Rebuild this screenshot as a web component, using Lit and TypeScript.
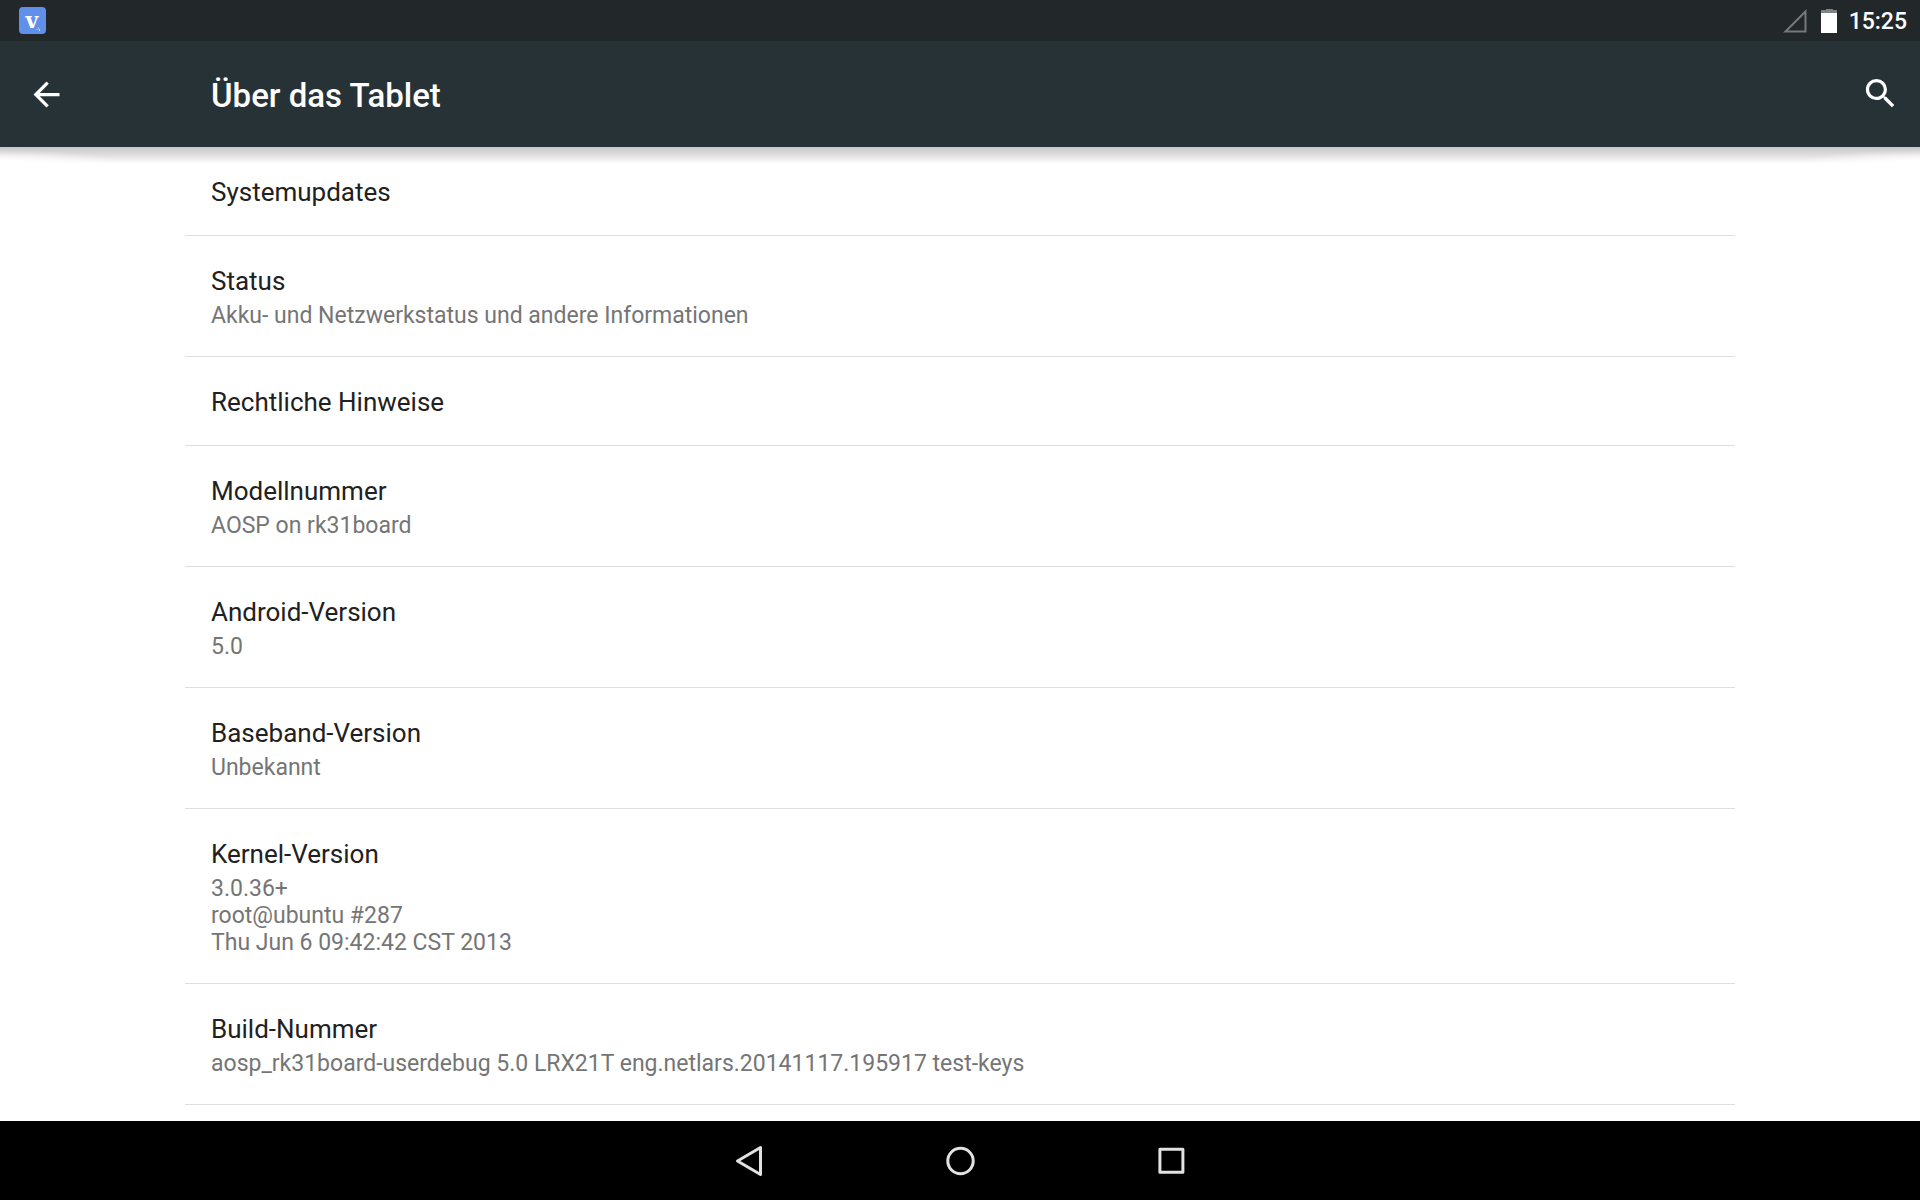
import { LitElement, html, css, svg, nothing } from "lit";
import { customElement, property } from "lit/decorators.js";

interface Entry {
  title: string;
  lines: string[];
  opens?: boolean;
}

const ENTRIES: Entry[] = [
  { title: "Systemupdates", lines: [], opens: true },
  { title: "Status", lines: ["Akku- und Netzwerkstatus und andere Informationen"], opens: true },
  { title: "Rechtliche Hinweise", lines: [], opens: true },
  { title: "Modellnummer", lines: ["AOSP on rk31board"] },
  { title: "Android-Version", lines: ["5.0"] },
  { title: "Baseband-Version", lines: ["Unbekannt"] },
  { title: "Kernel-Version", lines: ["3.0.36+", "root@ubuntu #287", "Thu Jun 6 09:42:42 CST 2013"] },
  { title: "Build-Nummer", lines: ["aosp_rk31board-userdebug 5.0 LRX21T eng.netlars.20141117.195917 test-keys"] },
];

@customElement("status-bar")
export class StatusBar extends LitElement {
  @property() time = "";

  static styles = css`
    :host {
      display: flex;
      align-items: center;
      height: 41px;
      padding: 0 13px 0 19px;
      background: #22272a;
      color: #fff;
      flex: none;
    }
    .spacer {
      flex: 1;
    }
    svg {
      display: block;
    }
    .app {
      overflow: visible;
    }
    .mark {
      font-family: "DejaVu Serif", serif;
      font-size: 22px;
      font-weight: 700;
    }
    .signal {
      margin-right: 14px;
    }
    .battery {
      margin-right: 12px;
    }
    .time {
      padding-top: 2px;
      font-size: 23px;
      font-weight: 500;
      line-height: 28px;
    }
  `;

  render() {
    return html`
      <svg class="app" width="27" height="27" viewBox="0 0 27 27" aria-hidden="true">
        <rect width="27" height="27" rx="4" fill="#6190ea" />
        <text class="mark" x="13" y="21" text-anchor="middle" fill="#fff">v</text>
        <path d="M17.500 22.500h1M19.500 20.500v1M20.500 22v2" stroke="#cfdcf8" />
      </svg>
      <div class="spacer"></div>
      <svg class="signal" width="24" height="24" viewBox="0 0 24 24" aria-hidden="true">
        <path d="M2.500 22.500h20V2.500z" fill="none" stroke="#75797a" stroke-width="2" />
      </svg>
      <svg class="battery" width="16" height="24" viewBox="0 0 16 24" aria-hidden="true">
        <path d="M5 0h7v1h4v3H0V1h5z" fill="#808384" />
        <path d="M0 4h16v20H0z" fill="#fff" />
      </svg>
      <span class="time">${this.time}</span>
    `;
  }
}

@customElement("action-bar")
export class ActionBar extends LitElement {
  @property() heading = "";

  static styles = css`
    :host {
      display: grid;
      grid-template-columns: 211px 1fr auto;
      align-items: center;
      height: 106px;
      background: #273237;
      color: #fff;
      flex: none;
    }
    h1 {
      margin: 0;
      padding-top: 4px;
      font-size: 33px;
      font-weight: 500;
      line-height: 40px;
    }
    button {
      display: flex;
      padding: 8px 20px;
      border: 0;
      background: none;
      color: inherit;
    }
    .back {
      justify-self: start;
      padding-left: 27px;
    }
    .search {
      padding-bottom: 10px;
    }
  `;

  render() {
    return html`
      <button class="back" type="button" aria-label="Zurück">
        <svg width="39" height="39" viewBox="0 0 24 24" fill="currentColor">
          <path d="M20 11H7.830l5.590-5.590L12 4l-8 8 8 8 1.410-1.410L7.830 13H20v-2z" />
        </svg>
      </button>
      <h1>${this.heading}</h1>
      <button class="search" type="button" aria-label="Suchen">
        <svg width="39" height="39" viewBox="0 0 24 24" fill="currentColor">
          <path
            d="M15.500 14h-.790l-.280-.270A6.471 6.471 0 0 0 16 9.500 6.500 6.500 0 1 0 9.500 16c1.610 0 3.090-.590 4.230-1.570l.270.280v.790l5 4.990L20.490 19l-4.990-5zm-6 0C7.010 14 5 11.990 5 9.500S7.010 5 9.500 5 14 7.010 14 9.500 11.990 14 9.500 14z"
          />
        </svg>
      </button>
    `;
  }
}

@customElement("nav-bar")
export class NavBar extends LitElement {
  static styles = css`
    :host {
      display: flex;
      justify-content: center;
      align-items: center;
      gap: 131px;
      height: 79px;
      background: #000;
      flex: none;
    }
    button {
      display: flex;
      justify-content: center;
      width: 80px;
      padding: 8px 0;
      border: 0;
      background: none;
    }
  `;

  private icon(label: string, shape: unknown) {
    return html`
      <button type="button" aria-label=${label}>
        <svg width="36" height="36" viewBox="0 0 36 36" fill="none" stroke="#e2e2e2" stroke-width="3" stroke-linejoin="round">
          ${shape}
        </svg>
      </button>
    `;
  }

  render() {
    return html`
      ${this.icon("Zurück", svg`<path d="M6.500 18 29.500 4.500v27z" />`)}
      ${this.icon("Startseite", svg`<circle cx="18.500" cy="18" r="12.700" />`)}
      ${this.icon("Übersicht", svg`<rect x="6.900" y="6.300" width="23" height="23" />`)}
    `;
  }
}

@customElement("app-root")
export class AppRoot extends LitElement {
  static styles = css`
    :host {
      display: flex;
      flex-direction: column;
      height: 100vh;
      background: #fff;
      font-family: Roboto, "Liberation Sans", sans-serif;
    }
    main {
      flex: 1;
      min-height: 0;
      overflow: hidden auto;
      background:
        radial-gradient(120px 14px at 0 100%, #fff 20%, transparent) 0 0 / 120px 17px no-repeat,
        radial-gradient(120px 14px at 100% 100%, #fff 20%, transparent) 100% 0 / 120px 17px no-repeat,
        linear-gradient(#c8c8c8, #d8d8d8 6px, #eee 12px, #fff 17px) no-repeat #fff;
    }
    ul {
      margin: 0;
      padding: 0 185px;
      list-style: none;
    }
    li {
      border-bottom: 1px solid #dedede;
    }
    .row {
      display: flex;
      flex-direction: column;
      gap: 5px;
      box-sizing: border-box;
      width: 100%;
      padding: 29px 26px 27px;
      border: 0;
      background: none;
      font: inherit;
      text-align: left;
    }
    .title {
      color: #212121;
      font-size: 26px;
      line-height: 32px;
    }
    .summary {
      color: #757575;
      font-size: 23px;
      line-height: 27px;
      white-space: pre-line;
    }
  `;

  private row(entry: Entry) {
    const content = html`
      <span class="title">${entry.title}</span>
      ${entry.lines.length ? html`<span class="summary">${entry.lines.join("\n")}</span>` : nothing}
    `;
    return html`
      <li>
        ${entry.opens
          ? html`<button type="button" class="row">${content}</button>`
          : html`<div class="row">${content}</div>`}
      </li>
    `;
  }

  render() {
    return html`
      <status-bar time="15:25"></status-bar>
      <action-bar heading="Über das Tablet"></action-bar>
      <main>
        <ul>
          ${ENTRIES.map((entry) => this.row(entry))}
        </ul>
      </main>
      <nav-bar></nav-bar>
    `;
  }
}
